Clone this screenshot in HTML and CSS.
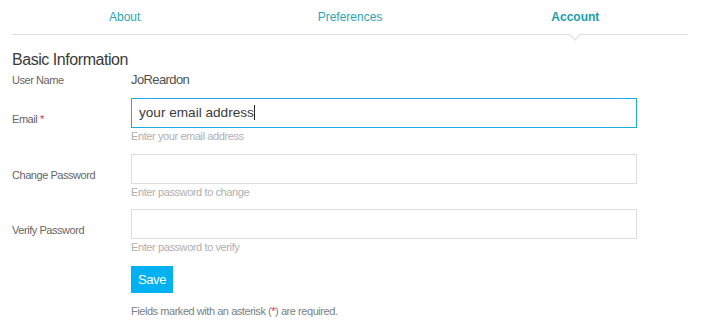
FILE: index.html
```html
<!DOCTYPE html>
<html>
<head>
<meta charset="utf-8">
<link rel="stylesheet" href="styles.css">
</head>
<body>
<nav class="tabs">
  <div class="tab">About</div>
  <div class="tab">Preferences</div>
  <div class="tab active">Account<span class="caret"></span></div>
</nav>
<main class="content">
  <h2 class="heading">Basic Information</h2>
  <div class="row static">
    <div class="label">User Name</div>
    <div class="value">JoReardon</div>
  </div>
  <div class="row">
    <div class="label">Email <span class="req">*</span></div>
    <div class="field">
      <div class="input focused">your email address<span class="cursor"></span></div>
      <div class="help">Enter your email address</div>
    </div>
  </div>
  <div class="row">
    <div class="label">Change Password</div>
    <div class="field">
      <input class="input" type="password">
      <div class="help">Enter password to change</div>
    </div>
  </div>
  <div class="row tight">
    <div class="label">Verify Password</div>
    <div class="field">
      <input class="input" type="password">
      <div class="help">Enter password to verify</div>
    </div>
  </div>
  <div class="row actions">
    <div></div>
    <div class="field">
      <button class="save">Save</button>
      <p class="note">Fields marked with an asterisk (<span class="req">*</span>) are required.</p>
    </div>
  </div>
</main>
</body>
</html>
```

FILE: styles.css
```css
* { box-sizing: border-box; }
body {
  margin: 0;
  font-family: "Liberation Sans", Arial, sans-serif;
  background: #fff;
  color: #444;
}
.tabs {
  display: flex;
  margin: 0 23px 0 12px;
  border-bottom: 1px solid #ddd;
}
.tab {
  flex: 1;
  text-align: center;
  height: 34px;
  line-height: 34px;
  font-size: 12px;
  color: #2aa6b2;
  position: relative;
}
.tab.active {
  font-weight: bold;
  color: #1a9ea9;
}
.caret {
  position: absolute;
  left: 50%;
  bottom: -5px;
  width: 8px;
  height: 8px;
  margin-left: -4px;
  background: #fff;
  border-right: 1px solid #ddd;
  border-bottom: 1px solid #ddd;
  transform: rotate(45deg);
}
.content {
  padding: 0 12px;
}
.heading {
  margin: 15px 0 0;
  font-size: 16px;
  line-height: 20px;
  font-weight: normal;
  letter-spacing: -0.45px;
  color: #3a3a3a;
}
.row {
  display: grid;
  grid-template-columns: 119px 506px;
  margin-top: 11px;
}
.row.static { margin-top: 0; }
.row.static + .row { margin-top: 8px; }
.row.tight { margin-top: 10px; }
.row.static .label { padding-top: 0; line-height: 20px; }
.label {
  font-size: 11px;
  line-height: 14px;
  letter-spacing: -0.45px;
  color: #666;
  padding-top: 14px;
}
.value {
  font-size: 13px;
  line-height: 20px;
  letter-spacing: -0.6px;
  color: #505050;
}
.req { color: #e2333a; }
.input {
  display: block;
  width: 506px;
  height: 30px;
  border: 1px solid #ddd;
  padding: 0 7px;
  font-family: inherit;
  font-size: 13.6px;
  line-height: 28px;
  color: #3a3a3a;
  outline: none;
  background: #fff;
}
.input.focused { border-color: #1fa9e6; }
.cursor {
  display: inline-block;
  width: 1px;
  height: 15px;
  background: #222;
  vertical-align: -3px;
}
.help {
  margin-top: 1px;
  font-size: 11px;
  line-height: 14px;
  letter-spacing: -0.4px;
  color: #b0b0b0;
}
.actions { margin-top: 12px; }
.save {
  display: block;
  height: 27px;
  padding: 0 7px;
  border: none;
  background: #00b1f1;
  color: #fff;
  font-family: inherit;
  font-size: 13px;
  letter-spacing: -0.4px;
}
.note {
  margin: 11px 0 0;
  font-size: 11px;
  line-height: 14px;
  letter-spacing: -0.45px;
  color: #808080;
}
```
